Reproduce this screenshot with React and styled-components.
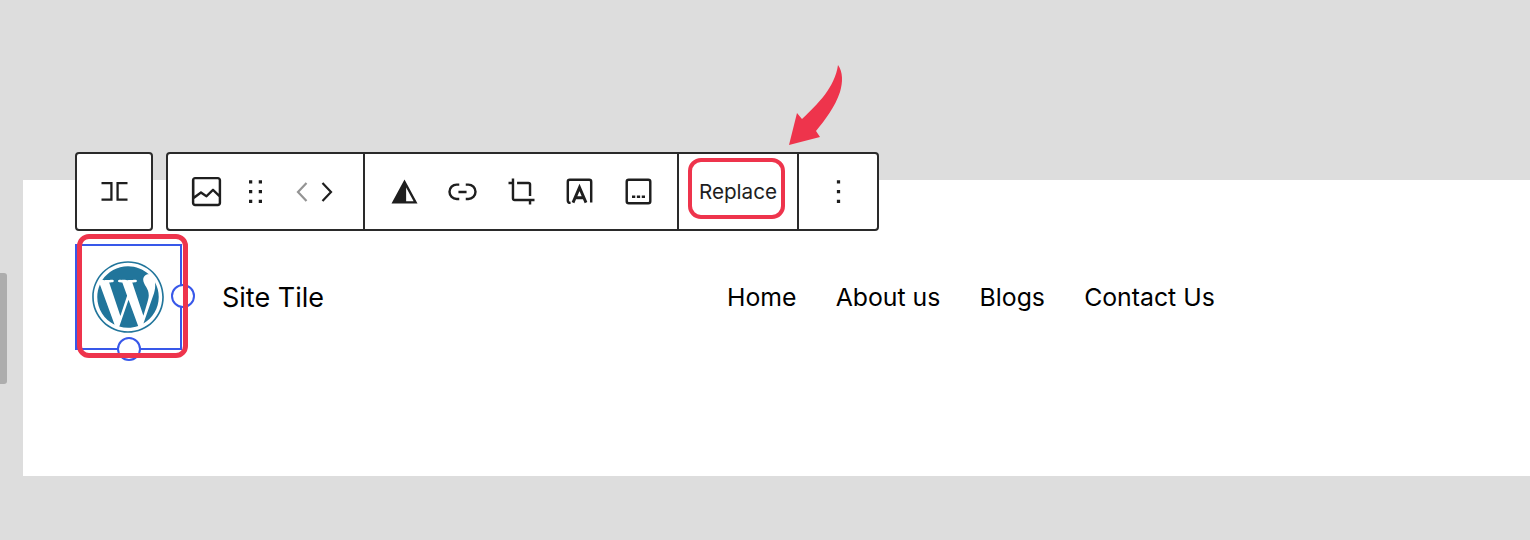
import React from 'react'
import styled, { createGlobalStyle } from 'styled-components'
import { FaWordpress } from 'react-icons/fa'

const navLinks = ['Home', 'About us', 'Blogs', 'Contact Us']

const Icon = ({ children, size = 39 }) => (
  <svg width={size} height={size} viewBox="0 0 24 24" fill="currentColor">{children}</svg>
)

export default function App() {
  return (
    <Page>
      <GlobalStyle />
      <ScrollThumb />
      <Arrow width="70" height="90" viewBox="0 0 70 90">
        <path d="M9 85 L17 53 L22 59 C38 44 55 27 58 5 C63 12 63 22 60 32 C55 47 45 60 36 71 L40 77 Z" fill="#ee344c" />
      </Arrow>
      <Canvas>
        <Toolbar>
          <Group>
            <Section $width={74}>
              <Icon>
                <path d="M4 6.800h6.100V17H4M20 6.800h-6.100V17H20" fill="none" stroke="currentColor" strokeWidth="1.400" />
              </Icon>
            </Section>
          </Group>
          <Group>
            <Section $width={195} $gap={10} $start>
              <Icon>
                <path d="M19 3H5c-1.100 0-2 .9-2 2v14c0 1.100.9 2 2 2h14c1.100 0 2-.9 2-2V5c0-1.100-.9-2-2-2zM5 4.500h14c.3 0 .5.2.5.5v8.400l-3-2.900c-.3-.3-.8-.3-1 0L11.900 14 9 12c-.3-.2-.6-.2-.8 0l-3.600 2.600V5c-.1-.3.1-.5.4-.5zm14 15H5c-.3 0-.5-.2-.5-.5v-2.400l4.100-3 3 1.900c.3.2.7.2.9-.1L16 12l3.500 3.400V19c0 .3-.2.5-.5.5z" />
              </Icon>
              <Icon>
                <path d="M8 7h2V5H8v2zm0 6h2v-2H8v2zm0 6h2v-2H8v2zm6-14v2h2V5h-2zm0 8h2v-2h-2v2zm0 6h2v-2h-2v2z" />
              </Icon>
              <Movers>
                <Chevron $muted viewBox="0 0 14 24" width="14" height="24">
                  <path d="M11.500 3 L3 12 L11.500 21" />
                </Chevron>
                <Chevron viewBox="0 0 14 24" width="14" height="24">
                  <path d="M2.500 3 L11 12 L2.500 21" />
                </Chevron>
              </Movers>
            </Section>
            <Section $width={314} $gap={19.500} $divider>
              <Icon>
                <path d="M12 4.600 L4 19.400 H20 Z M13 9.500 V18 H17.600 Z" fillRule="evenodd" />
              </Icon>
              <Icon>
                <path d="M10 17.389H8.444A5.194 5.194 0 1 1 8.444 7H10v1.500H8.444a3.694 3.694 0 0 0 0 7.389H10v1.500ZM14 7h1.556a5.194 5.194 0 0 1 0 10.390H14v-1.500h1.556a3.694 3.694 0 0 0 0-7.390H14V7Zm-4.500 6h5v-1.500h-5V13Z" />
              </Icon>
              <Icon>
                <path d="M18 20v-2h2v-1.500H7.750a.25.25 0 0 1-.25-.25V4H6v2H4v1.500h2v8.750c0 .966.784 1.750 1.750 1.750h8.750v2H18ZM9.273 7.500h6.977a.25.25 0 0 1 .25.25v6.977H18V7.750A1.750 1.750 0 0 0 16.250 6H9.273v1.500Z" />
              </Icon>
              <Icon>
                <path d="M6.500 19 C5.300 19 4.800 18.500 4.800 17.500 V6 C4.800 5.300 5.300 4.800 6 4.800 H18 C18.700 4.800 19.200 5.300 19.200 6 V18.800" fill="none" stroke="currentColor" strokeWidth="1.500" />
                <path d="M8 18.800 L12 9.500 L16 18.800 M9.500 15.800 H14.500" fill="none" stroke="currentColor" strokeWidth="1.800" />
              </Icon>
              <Icon>
                <path fillRule="evenodd" d="M6 5.500h12a.5.5 0 01.5.5v12a.5.5 0 01-.5.5H6a.5.5 0 01-.5-.5V6a.5.5 0 01.5-.5zM4 6a2 2 0 012-2h12a2 2 0 012 2v12a2 2 0 01-2 2H6a2 2 0 01-2-2V6zm4 10h2v-1.500H8V16zm5 0h-2v-1.500h2V16zm1 0h2v-1.500h-2V16z" />
              </Icon>
            </Section>
            <Section $width={120} $divider>
              <ReplaceLabel>
                Replace
                <ReplaceRing />
              </ReplaceLabel>
            </Section>
            <Section $width={80} $divider>
              <Icon>
                <path d="M13 19h-2v-2h2v2zm0-6h-2v-2h2v2zm0-6h-2V5h2v2z" />
              </Icon>
            </Section>
          </Group>
        </Toolbar>
        <SiteHeader>
          <LogoBlock>
            <FaWordpress size={74} color="#21759b" />
            <Handle $side="right" />
            <Handle $side="bottom" />
            <LogoRing />
          </LogoBlock>
          <SiteTitle>Site Tile</SiteTitle>
          <Nav>
            {navLinks.map((link) => <NavLink key={link}>{link}</NavLink>)}
          </Nav>
        </SiteHeader>
      </Canvas>
    </Page>
  )
}

const GlobalStyle = createGlobalStyle`
  html, body {
    margin: 0;
    padding: 0;
    background: #dddddd;
    overflow: hidden;
  }
  body {
    font-family: Inter, "Liberation Sans", sans-serif;
    color: #000;
  }
  * {
    box-sizing: border-box;
  }
`

const Page = styled.div`
  position: relative;
  height: 540px;
  padding: 180px 0 0 23px;
  background: #dddddd;
`

const ScrollThumb = styled.div`
  position: absolute;
  left: 0;
  top: 273px;
  width: 7px;
  height: 111px;
  background: #adadad;
  border-radius: 0 3px 3px 0;
`

const Arrow = styled.svg`
  position: absolute;
  left: 780px;
  top: 60px;
  z-index: 2;
`

const Canvas = styled.div`
  position: relative;
  height: 296px;
  background: #fff;
`

const Toolbar = styled.div`
  position: absolute;
  left: 52px;
  top: -28px;
  display: flex;
  gap: 13px;
  z-index: 1;
`

const Group = styled.div`
  display: flex;
  height: 79px;
  background: #fff;
  border: 2px solid #2a2a2a;
  border-radius: 4px;
`

const Section = styled.div`
  display: flex;
  align-items: center;
  justify-content: ${(p) => (p.$start ? 'flex-start' : 'center')};
  gap: ${(p) => p.$gap || 0}px;
  width: ${(p) => p.$width}px;
  padding-left: ${(p) => (p.$start ? '19px' : '0')};
  color: #1e1e1e;
  border-left: ${(p) => (p.$divider ? '2px solid #2a2a2a' : 'none')};
`

const Movers = styled.div`
  display: flex;
  align-items: center;
  gap: 11px;
  margin-left: 9.500px;
`

const Chevron = styled.svg`
  fill: none;
  stroke: ${(p) => (p.$muted ? '#949494' : '#1e1e1e')};
  stroke-width: 2.200;
`

const ReplaceLabel = styled.div`
  position: relative;
  font-size: 20.700px;
  line-height: 26px;
  color: #1e1e1e;
  white-space: nowrap;
`

const ReplaceRing = styled.div`
  position: absolute;
  left: -11px;
  top: -21px;
  width: 97px;
  height: 61px;
  border: 4.500px solid #ee344c;
  border-radius: 13px;
`

const SiteHeader = styled.div`
  display: flex;
  align-items: center;
  padding: 64px 0 0 52px;
`

const LogoBlock = styled.div`
  position: relative;
  display: flex;
  align-items: center;
  justify-content: center;
  width: 107px;
  height: 106px;
  padding-right: 3px;
  border: 2px solid #3858e9;
  border-left-width: 4px;
  flex-shrink: 0;
`

const Handle = styled.div`
  position: absolute;
  width: 24px;
  height: 24px;
  background: #fff;
  border: 2.500px solid #3858e9;
  border-radius: 50%;
  ${(p) => (p.$side === 'right'
    ? 'right: -15px; top: 38px;'
    : 'left: 38px; bottom: -13px;')}
`

const LogoRing = styled.div`
  position: absolute;
  left: -2px;
  top: -12px;
  width: 111px;
  height: 124px;
  border: 5px solid #ee344c;
  border-radius: 12px;
`

const SiteTitle = styled.div`
  margin: 2px 0 0 40px;
  font-size: 27px;
  line-height: 34px;
  white-space: nowrap;
`

const Nav = styled.nav`
  display: flex;
  gap: 39.200px;
  margin-left: 403px;
`

const NavLink = styled.a`
  font-size: 24.800px;
  line-height: 34px;
  white-space: nowrap;
`
